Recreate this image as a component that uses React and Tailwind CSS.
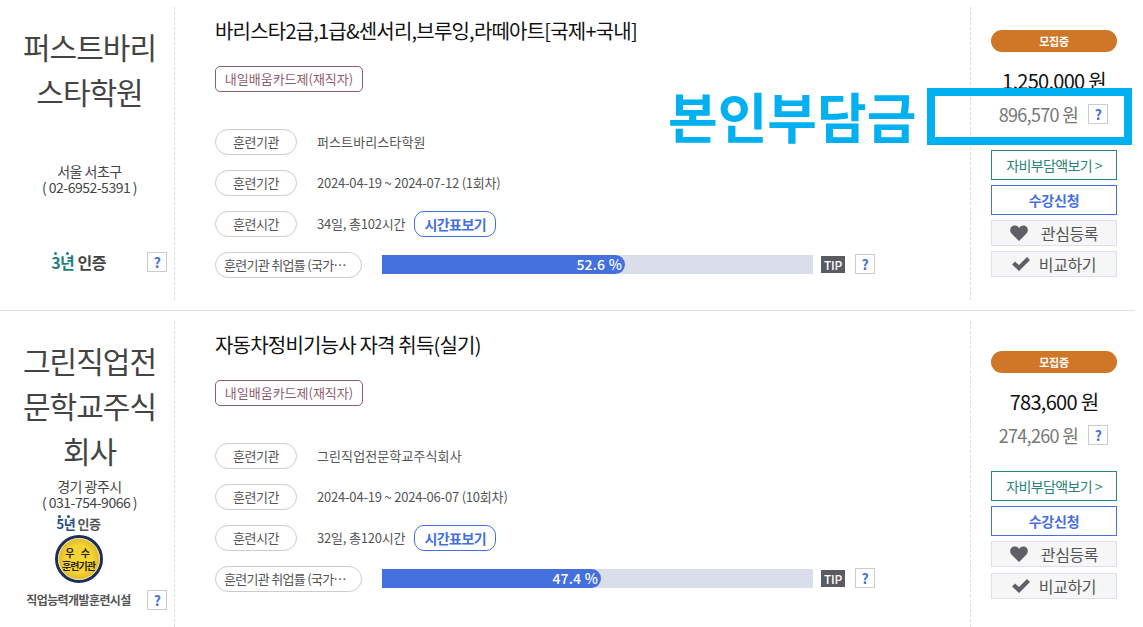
import React from 'react';

const font = { fontFamily: '"Noto Sans CJK KR", "Noto Sans", sans-serif' };

function Help({ className = '' }) {
  return (
    <span className={`flex h-[20px] w-[20px] shrink-0 items-center justify-center border border-[#cccccc] bg-white text-[14px] font-bold leading-none text-[#4470dd] ${className}`}>?</span>
  );
}

function Pill({ children, wide }) {
  return (
    <span className={`flex h-[26px] shrink-0 items-center justify-center rounded-[13px] border border-[#cccccc] bg-white text-[13px] text-[#555555] ${wide ? 'w-[147px] justify-start pl-[8px] tracking-[-0.7px]' : 'w-[82px] tracking-[-0.5px]'}`}>
      {children}
    </span>
  );
}

function InfoRow({ label, children }) {
  return (
    <div className="flex h-[26px] items-center">
      <Pill>{label}</Pill>
      <span className="ml-[20px] flex items-center text-[13px] tracking-[-0.2px] text-[#555555]">{children}</span>
    </div>
  );
}

function Heart() {
  return (
    <svg width="18" height="16" viewBox="0 0 18 16" className="shrink-0">
      <path d="M9 16 L1.5 8.5 C-0.8 6 0 1.5 3.5 0.6 C5.8 0 7.8 1 9 3 C10.2 1 12.2 0 14.5 0.6 C18 1.5 18.8 6 16.5 8.5 Z" fill="#5f5f66" />
    </svg>
  );
}

function Check() {
  return (
    <svg width="18" height="14" viewBox="0 0 18 14" className="shrink-0">
      <path d="M0 7.5 L3 4.5 L7 8 L15 0 L18 3 L7 14 Z" fill="#5f5f66" />
    </svg>
  );
}

function Medal() {
  return (
    <div className="flex h-[48px] w-[48px] items-center justify-center rounded-full border-[3px] border-[#1d2f57] bg-[radial-gradient(circle,#f4d534_45%,#c9981c_100%)] outline outline-1 -outline-offset-4 outline-[#e8e2c0]">
      <div className="flex flex-col items-center text-[10px] font-bold leading-[13px] text-[#2b2411]">
        <span className="tracking-[2px]">우 수</span>
        <span className="tracking-[-0.9px]">훈련기관</span>
      </div>
    </div>
  );
}

function Years({ n, color, top, a, b }) {
  return (
    <span className="relative" style={{ color }}>
      {n}
      <span className="absolute h-[3px] w-[3px] rounded-full" style={{ background: color, top, left: a }} />
      <span className="absolute h-[3px] w-[3px] rounded-full" style={{ background: color, top, left: b }} />
    </span>
  );
}

function Course({ rowClass, nameLines, addr, phone, addrTop, cert, title, inst, period, hours, pct, fill, price, sub, rightTop, lastGap }) {
  return (
    <div className={`flex w-[1135px] ${rowClass}`}>
      <div className="flex w-[175px] shrink-0 flex-col items-center border-r border-dashed border-[#dddddd] pl-[5px] pt-[17px]">
        <div className="text-center text-[30px] leading-[45px] tracking-[-1px] text-[#444444]">
          {nameLines.map((l) => <div key={l}>{l}</div>)}
        </div>
        <div className="text-center text-[14px] leading-[16px] tracking-[-0.5px] text-[#444444]" style={{ marginTop: addrTop }}>
          <div>{addr}</div>
          <div>( {phone} )</div>
        </div>
        {cert}
      </div>
      <div className="min-w-0 flex-1 border-r border-dashed border-[#dddddd] pl-[40px]">
        <div className="pt-[10px] text-[20px] leading-[28px] tracking-[-0.8px] text-[#111111]">{title}</div>
        <div className="mt-[21px] flex h-[26px] w-[148px] items-center justify-center rounded-[5px] border border-[#8f5b6e] text-[13px] tracking-[0px] text-[#8f5b6e]">내일배움카드제(재직자)</div>
        <div className="mt-[37px] flex flex-col gap-[15px]">
          <InfoRow label="훈련기관"><span className="tracking-[0.1px]">{inst}</span></InfoRow>
          <InfoRow label="훈련기간">{period}</InfoRow>
          <InfoRow label="훈련시간">
            {hours}
            <span className="ml-[9px] flex h-[26px] w-[82px] items-center justify-center rounded-[10px] border border-[#4470dd] text-[14px] font-bold tracking-[-0.6px] text-[#4470dd]">시간표보기</span>
          </InfoRow>
          <div className="flex h-[26px] items-center">
            <Pill wide>훈련기관 취업률 (국가…</Pill>
            <div className="mb-[1px] ml-[20px] h-[19px] w-[431px] bg-[#d9deea]">
              <div className="flex h-full items-center justify-end rounded-r-[10px] bg-[#4470dd] pr-[3px] text-[14px] font-medium tracking-[0.2px] text-white" style={{ width: fill }}>{pct} %</div>
            </div>
            <span className="mb-[1px] ml-[8px] flex h-[17px] w-[24px] items-center justify-center bg-[#5a5a61] text-[12px] font-medium tracking-[-0.3px] text-white">TIP</span>
            <Help className="mb-[2px] ml-[10px]" />
          </div>
        </div>
      </div>
      <div className="flex w-[164px] shrink-0 flex-col pl-[20px]" style={{ paddingTop: rightTop }}>
        <div className="flex h-[22px] w-[126px] items-center justify-center rounded-[11px] bg-[#cf7627] text-[11px] font-bold tracking-[-0.3px] text-white">모집중</div>
        <div className="mt-[16px] w-[126px] text-center text-[20px] leading-[26px] tracking-[-0.7px] text-[#111111]">{price} 원</div>
        <div className="mt-[10px] flex h-[20px] w-[126px] items-center justify-end gap-[10px] pr-[9px] text-[18px] tracking-[-0.7px] text-[#777777]">
          <span>{sub} 원</span>
          <Help />
        </div>
        <div className="mt-[26px] flex h-[30px] w-[126px] items-center justify-center border border-[#2a8378] text-[14px] tracking-[-0.6px] text-[#2a8378]">자비부담액보기 &gt;</div>
        <div className="mt-[5px] flex h-[30px] w-[126px] items-center justify-center border border-[#4470dd] text-[14px] font-bold tracking-[-0.2px] text-[#4470dd]">수강신청</div>
        <div className="mt-[5px] flex h-[26px] w-[126px] items-center justify-center gap-[13px] border border-[#dde0ea] bg-[#f6f6f6] pb-[1px] text-[16px] tracking-[-0.4px] text-[#555555]"><Heart />관심등록</div>
        <div className="flex h-[26px] w-[126px] items-center justify-center gap-[9px] border border-[#dde0ea] bg-[#f6f6f6] pb-[1px] text-[16px] tracking-[-0.4px] text-[#555555]" style={{ marginTop: lastGap }}><Check />비교하기</div>
      </div>
    </div>
  );
}

export default function App() {
  return (
    <div className="relative h-[627px] w-[1143px] overflow-hidden bg-white" style={font}>
      <div className="pt-[7px]">
        <Course
          rowClass="h-[293px]"
          nameLines={['퍼스트바리', '스타학원']}
          addr="서울 서초구"
          phone="02-6952-5391"
          addrTop="49px"
          lastGap="5px"
          cert={
            <div className="relative mt-[57px] flex w-full items-center justify-center pr-[22px] text-[16px] font-bold leading-[20px] tracking-[-0.5px] text-[#444444]">
              <Years n="3년" color="#1f7f80" top="0px" a="3px" b="15px" />&nbsp;인증
              <Help className="absolute left-[142px] top-0" />
            </div>
          }
          title="바리스타2급,1급&센서리,브루잉,라떼아트[국제+국내]"
          inst="퍼스트바리스타학원"
          period="2024-04-19 ~ 2024-07-12 (1회차)"
          hours="34일, 총102시간"
          pct="52.6"
          fill="243px"
          price="1,250,000"
          sub="896,570"
          rightTop="23px"
        />
        <div className="mt-[10px] h-px w-[1135px] bg-[#dddddd]" />
        <div className="mt-[10px]">
          <Course
            rowClass="h-[306px]"
            nameLines={['그린직업전', '문학교주식', '회사']}
            addr="경기 광주시"
            phone="031-754-9066"
            addrTop="5px"
            lastGap="6px"
            cert={
              <div className="flex w-full flex-col items-center pr-[22px]">
                <div className="mt-[5px] text-[13px] font-bold leading-[18px] tracking-[-0.5px] text-[#555555]"><Years n="5년" color="#234f86" top="1px" a="2px" b="11px" /> 인증</div>
                <div className="mt-[2px]"><Medal /></div>
                <div className="relative mt-[7px] w-full text-center text-[12px] font-bold leading-[20px] tracking-[-0.6px] text-[#555555]">
                  <span>직업능력개발훈련시설</span>
                  <Help className="absolute left-[142px] top-0" />
                </div>
              </div>
            }
            title="자동차정비기능사 자격 취득(실기)"
            inst="그린직업전문학교주식회사"
            period="2024-04-19 ~ 2024-06-07 (10회차)"
            hours="32일, 총120시간"
            pct="47.4"
            fill="219px"
            price="783,600"
            sub="274,260"
            rightTop="30px"
          />
        </div>
      </div>
      <div className="absolute left-[668px] top-[81px] text-[54px] font-bold leading-[70px] tracking-[0px] text-[#00b0f0]">본인부담금</div>
      <div className="absolute left-[927px] top-[88px] h-[57px] w-[205px] border-[8px] border-[#00b0f0]" />
    </div>
  );
}
